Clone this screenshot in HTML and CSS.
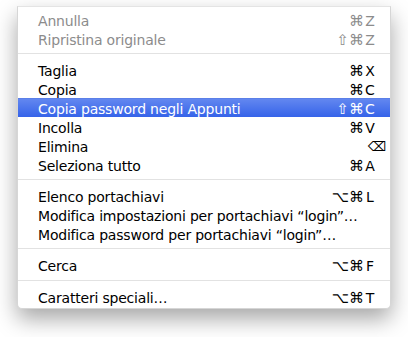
FILE: index.html
```html
<!DOCTYPE html>
<html>
<head>
<meta charset="utf-8">
<link rel="stylesheet" href="styles.css">
</head>
<body>
<div class="menu">
  <div class="item disabled"><span class="label">Annulla</span><span class="sc"><span class="mod">⌘</span><span class="key">Z</span></span></div>
  <div class="item disabled"><span class="label">Ripristina originale</span><span class="sc"><span class="mod">⇧⌘</span><span class="key">Z</span></span></div>
  <div class="sep"></div>
  <div class="item"><span class="label">Taglia</span><span class="sc"><span class="mod">⌘</span><span class="key">X</span></span></div>
  <div class="item"><span class="label">Copia</span><span class="sc"><span class="mod">⌘</span><span class="key">C</span></span></div>
  <div class="item selected"><span class="label">Copia password negli Appunti</span><span class="sc"><span class="mod">⇧⌘</span><span class="key">C</span></span></div>
  <div class="item"><span class="label">Incolla</span><span class="sc"><span class="mod">⌘</span><span class="key">V</span></span></div>
  <div class="item"><span class="label">Elimina</span><span class="sc"><span class="mod"></span><span class="key del">⌫</span></span></div>
  <div class="item"><span class="label">Seleziona tutto</span><span class="sc"><span class="mod">⌘</span><span class="key">A</span></span></div>
  <div class="sep"></div>
  <div class="item"><span class="label">Elenco portachiavi</span><span class="sc"><span class="mod">⌥⌘</span><span class="key">L</span></span></div>
  <div class="item"><span class="label">Modifica impostazioni per portachiavi “login”…</span></div>
  <div class="item"><span class="label">Modifica password per portachiavi “login”…</span></div>
  <div class="sep"></div>
  <div class="item"><span class="label">Cerca</span><span class="sc"><span class="mod">⌥⌘</span><span class="key">F</span></span></div>
  <div class="sep sep-wide"></div>
  <div class="item"><span class="label">Caratteri speciali…</span><span class="sc"><span class="mod">⌥⌘</span><span class="key">T</span></span></div>
</div>
</body>
</html>
```
FILE: styles.css
```css
html, body {
  margin: 0;
  padding: 0;
  background: #ffffff;
}
body {
  width: 408px;
  height: 337px;
  overflow: hidden;
}
.menu {
  box-sizing: border-box;
  margin: 6px 0 0 17px;
  width: 374px;
  height: 303px;
  padding: 3px 0 2px;
  background: #ffffff;
  border: 1px solid #d6d6d6;
  border-top-color: #e4e4e4;
  border-radius: 0 0 5px 5px;
  box-shadow: 0 10px 22px rgba(0, 0, 0, 0.35);
  display: flex;
  flex-direction: column;
  font-family: "DejaVu Sans", sans-serif;
  font-size: 14px;
  letter-spacing: -0.2px;
  color: #000;
}
.item {
  box-sizing: border-box;
  height: 19px;
  flex: none;
  display: flex;
  align-items: center;
  padding: 2px 14px 0 20px;
  white-space: nowrap;
}
.label {
  flex: 1;
}
.disabled {
  color: #8c8c8c;
}
.selected {
  background: linear-gradient(#6589f0, #3563e9);
  box-shadow: inset 0 1px 0 #5b7fe8;
  color: #fff;
}
.sc {
  display: flex;
  align-items: center;
}
.mod {
  text-align: right;
  font-size: 15px;
  letter-spacing: 0;
}
.key {
  width: 12px;
  text-align: center;
  letter-spacing: 0;
}
.del {
  position: relative;
  left: 4px;
  font-size: 13px;
}
.sep {
  flex: none;
  height: 1px;
  background: #e2e2e2;
  margin: 5px 0 6px;
}
.sep-wide {
  margin: 6px 0 6px;
}
```
